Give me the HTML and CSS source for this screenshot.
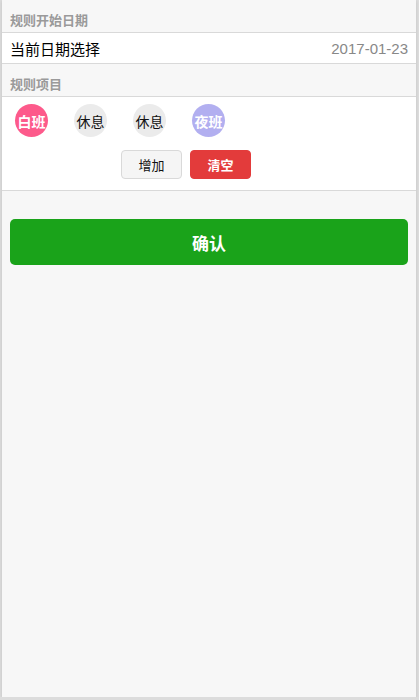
FILE: index.html
```html
<!DOCTYPE html>
<html lang="zh">
  <head>
    <meta charset="UTF-8" />
    <meta name="viewport" content="width=device-width, initial-scale=1.0" />
    <title>规则设置</title>
    <link rel="stylesheet" href="styles.css">
  </head>
  <body>
    <div class="app">
      <div class="section-title">规则开始日期</div>
      <div class="cell">
        <span class="cell-label">当前日期选择</span>
        <span class="cell-value">2017-01-23</span>
      </div>

      <div class="section-title">规则项目</div>
      <div class="rule-box">
        <div class="shift-list">
          <span class="shift shift-day">白班</span>
          <span class="shift shift-rest">休息</span>
          <span class="shift shift-rest">休息</span>
          <span class="shift shift-night">夜班</span>
        </div>
        <div class="actions">
          <button class="btn btn-add">增加</button>
          <button class="btn btn-clear">清空</button>
        </div>
      </div>

      <div class="confirm-wrap">
        <button class="btn-confirm">确认</button>
      </div>
    </div>
  </body>
</html>
```

FILE: styles.css
```css
* {
  box-sizing: border-box;
  font-family: "Liberation Sans", "Noto Sans CJK SC", sans-serif;
}

body {
  margin: 0;
  background: #dcdcdc;
}

.app {
  margin: 0 3px 0 2px;
  height: 697px;
  background: #f7f7f7;
  box-shadow: 0 1px 3px rgba(0, 0, 0, 0.12);
}

.section-title {
  height: 33px;
  padding: 10px 0 0 8px;
  font-size: 13px;
  font-weight: bold;
  color: #9a9a9a;
  border-bottom: 1px solid #d9d9d9;
}

.cell {
  display: flex;
  justify-content: space-between;
  align-items: center;
  height: 31px;
  padding: 0 8px;
  background: #fff;
  border-bottom: 1px solid #d9d9d9;
}

.cell-label {
  font-size: 15px;
  color: #000;
}

.cell-value {
  font-size: 15px;
  color: #888;
}

.rule-box {
  background: #fff;
  border-bottom: 1px solid #d9d9d9;
  padding: 7px 0 11px;
}

.shift-list {
  display: flex;
  gap: 26px;
  padding-left: 13px;
}

.shift {
  display: flex;
  justify-content: center;
  align-items: center;
  width: 33px;
  height: 33px;
  border-radius: 50%;
  font-size: 14px;
}

.shift-day {
  background: #fd5a8b;
  color: #fff;
  font-weight: bold;
}

.shift-rest {
  background: #ebebeb;
  color: #111;
}

.shift-night {
  background: #b2aff0;
  color: #fff;
  font-weight: bold;
}

.actions {
  display: flex;
  gap: 8px;
  padding-left: 119px;
  margin-top: 13px;
}

.btn {
  width: 61px;
  height: 29px;
  border-radius: 4px;
  font-size: 13px;
  cursor: pointer;
}

.btn-add {
  background: #f5f5f5;
  border: 1px solid #d9d9d9;
  color: #111;
}

.btn-clear {
  background: #e33b3b;
  border: 1px solid #e33b3b;
  color: #fff;
  font-weight: bold;
}

.confirm-wrap {
  padding: 28px 8px 0;
}

.btn-confirm {
  width: 100%;
  height: 46px;
  border: none;
  border-radius: 5px;
  background: #1aa31a;
  color: #fff;
  font-size: 17px;
  font-weight: bold;
  cursor: pointer;
}
```
